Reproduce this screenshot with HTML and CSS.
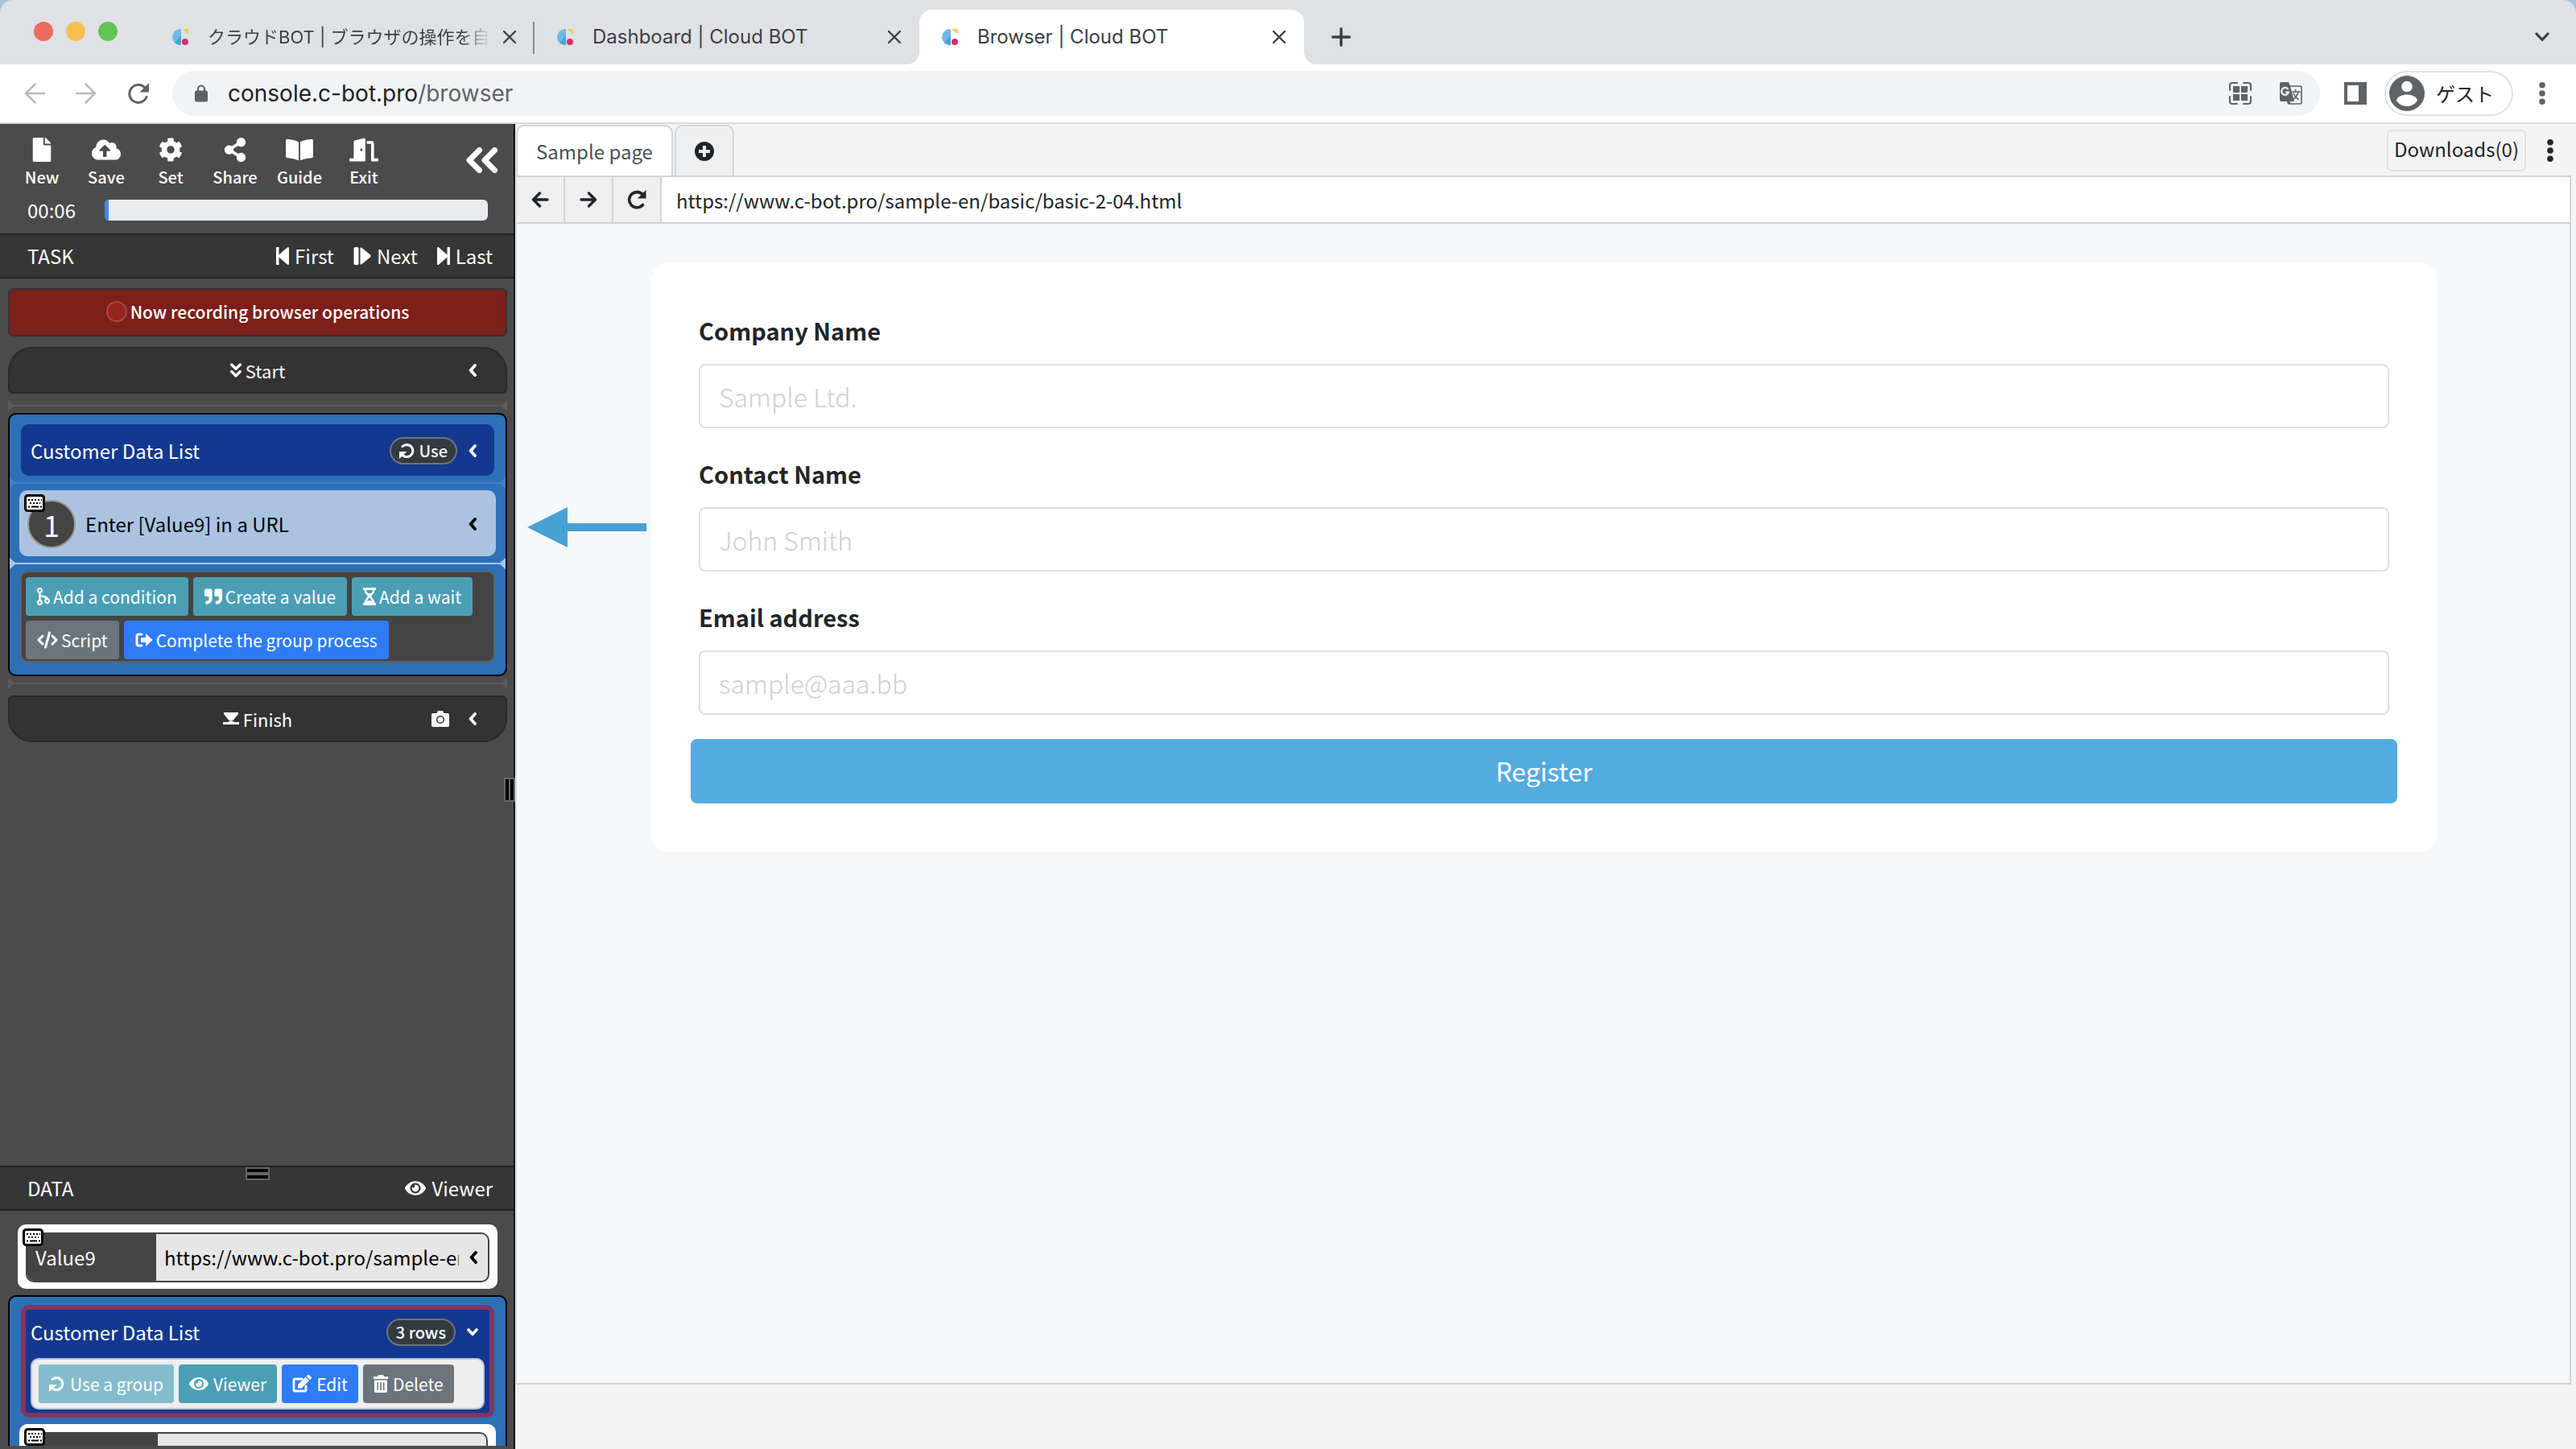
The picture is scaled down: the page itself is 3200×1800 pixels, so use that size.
FILE: index.html
```
<!DOCTYPE html>
<html lang="en">

<head>
    <meta charset="UTF-8">
    <meta name="viewport" content="width=device-width, initial-scale=1.0">
    <title>Browser | Cloud BOT</title>
    <link rel="stylesheet" href="styles.css">
</head>

<body>
    <!-- icon set -->
    <svg class="sprite" aria-hidden="true">
        <symbol id="favicon" viewBox="0 0 20 20">
            <path fill="#6fb9e8" d="M11 0v20h-1A10 10 0 0 1 10 0z" />
            <path fill="#4aa3dc" d="M11 8v12h-1a10 10 0 0 1-7-3z" />
            <path fill="#f3cd5c" d="M12 0h8v7z" />
            <circle fill="#d42f6d" cx="16" cy="16" r="4" />
        </symbol>
        <symbol id="close" viewBox="0 0 16 16">
            <path class="line" stroke-width="2.4" d="M1 1l14 14M15 1L1 15" />
        </symbol>
        <symbol id="plus" viewBox="0 0 24 24">
            <path class="line" stroke-width="3.4" d="M12 1.700v20.600M1.700 12h20.600" />
        </symbol>
        <symbol id="down" viewBox="0 0 18 12">
            <path class="line" stroke-width="3.2" d="M2 2l7 7.500L16 2" />
        </symbol>
        <symbol id="chevron-down" viewBox="0 0 14 12">
            <path class="line" stroke-width="3.6" d="M2 3l5 5.400L12 3" />
        </symbol>
        <symbol id="nav-back" viewBox="0 0 26 26">
            <path class="line" stroke-width="2.6" d="M25 13H2M13.500 1.500L2 13l11.500 11.500" />
        </symbol>
        <symbol id="nav-forward" viewBox="0 0 26 26">
            <path class="line" stroke-width="2.6" d="M1 13h23M12.500 1.500L24 13 12.500 24.500" />
        </symbol>
        <symbol id="nav-reload" viewBox="0 0 28 26">
            <path class="line" stroke-width="3" d="M24 17.500A11 11 0 1 1 21.500 5.500" />
            <path fill="currentColor" d="M27 0v11.500H15.500z" />
        </symbol>
        <symbol id="lock" viewBox="0 0 16 22">
            <path class="line" stroke-width="2.2" d="M4 9V5.500a4 4 0 0 1 8 0V9" />
            <rect fill="currentColor" y="7.500" width="16" height="14" rx="2" />
        </symbol>
        <symbol id="qr" viewBox="0 0 28 28">
            <path class="line" stroke-width="2" d="M1 10V4a3 3 0 0 1 3-3h6M18 1h6a3 3 0 0 1 3 3v6M27 18v6a3 3 0 0 1-3 3h-6M10 27H4a3 3 0 0 1-3-3v-6" />
            <path fill="currentColor" d="M5 5h8v8H5zM15 5h8v8h-8zM5 15h8v8H5zM15 15h8v8h-8z" />
        </symbol>
        <symbol id="translate" viewBox="0 0 28 28">
            <rect class="line" stroke-width="1.600" x="10" y="5" width="17" height="22" rx="2" />
            <path fill="currentColor" d="M2 0h9l2 5 5 19h-5v4l-4-4H2a2 2 0 0 1-2-2V2a2 2 0 0 1 2-2z" />
            <path fill="none" stroke="#f1f3f4" stroke-width="2.200" d="M10.500 9A4.500 4.500 0 1 0 11 12.500H7" />
            <path class="line" stroke-width="1.600" d="M14.500 12H25M19.500 9.500V12M23 12c-1 4-3 7-6 9M17 14c1 3 3.500 5.500 6 7.500" />
        </symbol>
        <symbol id="panel" viewBox="0 0 28 28">
            <path fill="currentColor" fill-rule="evenodd" d="M0 0h28v28H0zM4 4v20h14V4z" />
        </symbol>
        <symbol id="avatar" viewBox="0 0 44 44">
            <circle fill="currentColor" cx="22" cy="22" r="22" />
            <circle fill="#fff" cx="22" cy="13.500" r="6.800" />
            <path fill="#fff" d="M9 31c0-5 8-7.500 13-7.500S35 26 35 31c-3 4.500-8 7-13 7s-10-2.500-13-7z" />
        </symbol>
        <symbol id="dots" viewBox="0 0 8 28">
            <path fill="currentColor" d="M4 0a3.800 3.800 0 1 1 0 7.600A3.800 3.800 0 0 1 4 0zM4 10.200a3.800 3.800 0 1 1 0 7.600 3.800 3.800 0 0 1 0-7.600zM4 20.400a3.800 3.800 0 1 1 0 7.600 3.800 3.800 0 0 1 0-7.600z" />
        </symbol>
        <symbol id="file" viewBox="0 0 384 512">
            <path fill="currentColor" d="M224 136V0H24C10.700 0 0 10.700 0 24v464c0 13.300 10.700 24 24 24h336c13.300 0 24-10.700 24-24V160H248c-13.200 0-24-10.800-24-24zm160-14.100v6.100H256V0h6.100c6.400 0 12.500 2.500 17 7l97.900 98c4.500 4.500 7 10.600 7 16.900z" />
        </symbol>
        <symbol id="cloud" viewBox="0 0 640 512">
            <path fill="currentColor" d="M537.6 226.6c4.1-10.700 6.400-22.400 6.400-34.600 0-53-43-96-96-96-19.700 0-38.100 6-53.300 16.200C367 64.200 315.300 32 256 32c-88.400 0-160 71.600-160 160 0 2.700.1 5.400.2 8.100C40.200 219.800 0 273.200 0 336c0 79.500 64.500 144 144 144h368c70.700 0 128-57.300 128-128 0-61.900-44-113.600-102.400-125.400zM393.400 288H328v112c0 8.800-7.200 16-16 16h-48c-8.800 0-16-7.200-16-16V288h-65.400c-14.300 0-21.400-17.200-11.300-27.300l105.400-105.400c6.200-6.200 16.400-6.200 22.600 0l105.400 105.400c10.100 10.100 2.900 27.300-11.300 27.300z" />
        </symbol>
        <symbol id="cog" viewBox="0 0 512 512">
            <path fill="currentColor" d="M487.4 315.7l-42.600-24.600c4.300-23.200 4.300-47 0-70.200l42.600-24.600c4.900-2.800 7.100-8.600 5.500-14-11.100-35.600-30-67.800-54.700-94.600-3.800-4.100-10-5.100-14.800-2.300L380.800 110c-17.900-15.400-38.500-27.300-60.800-35.100V25.800c0-5.600-3.900-10.500-9.400-11.700-36.700-8.200-74.300-7.800-109.200 0-5.500 1.200-9.400 6.100-9.400 11.700V75c-22.200 7.900-42.800 19.800-60.800 35.100L88.700 85.500c-4.900-2.800-11-1.900-14.800 2.300-24.700 26.700-43.600 58.900-54.700 94.600-1.700 5.400.6 11.200 5.500 14L67.300 221c-4.300 23.200-4.300 47 0 70.200l-42.600 24.600c-4.900 2.800-7.100 8.600-5.500 14 11.100 35.600 30 67.800 54.700 94.600 3.800 4.100 10 5.100 14.800 2.300l42.600-24.600c17.900 15.400 38.500 27.300 60.800 35.100v49.200c0 5.600 3.900 10.500 9.400 11.700 36.700 8.200 74.300 7.800 109.200 0 5.500-1.200 9.400-6.100 9.400-11.700v-49.200c22.200-7.900 42.800-19.800 60.800-35.100l42.600 24.600c4.900 2.800 11 1.900 14.800-2.300 24.700-26.700 43.600-58.900 54.700-94.600 1.500-5.500-.7-11.300-5.600-14.100zM256 336c-44.100 0-80-35.900-80-80s35.900-80 80-80 80 35.900 80 80-35.900 80-80 80z" />
        </symbol>
        <symbol id="share" viewBox="0 0 448 512">
            <path fill="currentColor" d="M352 320c-22.600 0-43.400 7.800-59.800 20.900l-102.500-64a96.500 96.500 0 0 0 0-41.700l102.500-64C308.600 184.200 329.400 192 352 192c53 0 96-43 96-96S405 0 352 0s-96 43-96 96c0 7.200.8 14.100 2.300 20.800l-102.500 64.100C139.400 167.800 118.600 160 96 160c-53 0-96 43-96 96s43 96 96 96c22.600 0 43.400-7.800 59.800-20.900l102.500 64A96.300 96.300 0 0 0 256 416c0 53 43 96 96 96s96-43 96-96-43-96-96-96z" />
        </symbol>
        <symbol id="book" viewBox="0 0 576 512">
            <path fill="currentColor" d="M542.2 32c-54.800 3.100-163.700 14.500-231 55.600-4.600 2.900-7.200 7.900-7.200 13.200v363.900c0 11.500 12.600 18.800 23.300 13.500 69.200-34.800 169.200-44.300 218.700-46.900 16.900-.9 30-14.500 30-30.700V62.700c0-17.700-15.400-31.700-33.800-30.700zM264.700 87.600C197.500 46.500 88.600 35.200 33.800 32 15.400 31 0 45 0 62.700v337.900c0 16.200 13.100 29.800 30 30.700 49.500 2.600 149.600 12.100 218.800 46.900 10.600 5.400 23.200-1.900 23.200-13.400V100.600c0-5.300-2.600-10.100-7.300-13z" />
        </symbol>
        <symbol id="door" viewBox="0 0 640 512">
            <path fill="currentColor" d="M624 448h-80V113.400C544 86.200 522.500 64 496 64H384v64h96v384h144c8.800 0 16-7.200 16-16v-32c0-8.800-7.200-16-16-16zM312.200 1l-192 49.700C106 54.400 96 67.700 96 82.900V448H16c-8.800 0-16 7.200-16 16v32c0 8.800 7.200 16 16 16h336V33.200c0-21.600-19.600-37.400-39.800-32.200zM264 288c-13.200 0-24-14.300-24-32s10.800-32 24-32 24 14.300 24 32-10.700 32-24 32z" />
        </symbol>
        <symbol id="eye" viewBox="0 0 576 512">
            <path fill="currentColor" d="M572.5 241.400C518.300 135.600 410.900 64 288 64S57.700 135.600 3.500 241.400a32.300 32.300 0 0 0 0 29.200C57.700 376.400 165.100 448 288 448s230.300-71.600 284.500-177.400a32.300 32.300 0 0 0 0-29.200zM288 400a144 144 0 1 1 144-144 143.900 143.900 0 0 1-144 144zm0-240a95.300 95.300 0 0 0-25.300 3.800 47.800 47.800 0 0 1-66.900 66.900A95.800 95.800 0 1 0 288 160z" />
        </symbol>
        <symbol id="quote" viewBox="0 0 512 512">
            <path fill="currentColor" d="M464 32H336c-26.500 0-48 21.500-48 48v128c0 26.500 21.500 48 48 48h80v64c0 35.300-28.700 64-64 64h-8c-13.300 0-24 10.700-24 24v48c0 13.300 10.700 24 24 24h8c88.400 0 160-71.600 160-160V80c0-26.500-21.500-48-48-48zm-288 0H48C21.500 32 0 53.500 0 80v128c0 26.500 21.500 48 48 48h80v64c0 35.300-28.700 64-64 64h-8c-13.300 0-24 10.700-24 24v48c0 13.300 10.700 24 24 24h8c88.400 0 160-71.600 160-160V80c0-26.500-21.500-48-48-48z" />
        </symbol>
        <symbol id="double-left" viewBox="0 0 40 32">
            <path class="line" stroke-width="7" stroke-linejoin="miter" d="M17.500 3.500L5 16l12.500 12.500M36.500 3.500L24 16l12.500 12.500" />
        </symbol>
        <symbol id="double-down" viewBox="0 0 14 18">
            <path class="line" stroke-width="3.400" d="M1.700 2L7 7.200 12.300 2M1.700 10.500L7 15.700l5.300-5.200" />
        </symbol>
        <symbol id="chevron-left" viewBox="0 0 10 16">
            <path class="line" stroke-width="3.800" d="M8 2L2.600 8 8 14" />
        </symbol>
        <symbol id="step-first" viewBox="0 0 16 22">
            <path fill="currentColor" d="M0 0h3.500v9.500L14 .3q2-1 2 1v19.400q0 2-2 1L3.500 12.500V22H0z" />
        </symbol>
        <symbol id="step-last" viewBox="0 0 16 22">
            <path fill="currentColor" d="M16 0h-3.500v9.500L2 .3q-2-1-2 1v19.400q0 2 2 1l10.500-9.200V22H16z" />
        </symbol>
        <symbol id="step-next" viewBox="0 0 21 22">
            <rect fill="currentColor" width="6" height="22" rx="1.500" />
            <path fill="currentColor" d="M8 1.500Q8 0 9.500.5l11 9q1 1.500 0 3l-11 9Q8 22 8 20.500z" />
        </symbol>
        <symbol id="loop" viewBox="0 0 20 20">
            <path class="line" stroke-width="3" d="M4 4.500a7.600 7.600 0 1 1 1 11.800" />
            <path fill="currentColor" d="M0 11h9.500L0 20z" />
        </symbol>
        <symbol id="keyboard" viewBox="0 0 26 22">
            <rect x="1.500" y="1.500" width="23" height="19" rx="3" fill="#fff" stroke="#000" stroke-width="3" />
            <path stroke="#000" stroke-width="2" stroke-dasharray="2 2" d="M5 7h17M7 11h13" />
            <path stroke="#000" stroke-width="2" d="M5 15.500h2M9 15.500h9M20 15.500h2" />
        </symbol>
        <symbol id="branch" viewBox="0 0 16 22">
            <path class="line" stroke-width="2.400" d="M3.500 6v10M3.500 8c0 5 9 1 9 6" />
            <circle class="line" stroke-width="2" cx="3.500" cy="3.500" r="2.400" />
            <circle class="line" stroke-width="2" cx="3.500" cy="18.500" r="2.400" />
            <circle class="line" stroke-width="2" cx="12.500" cy="16.500" r="2.400" />
        </symbol>
        <symbol id="hourglass" viewBox="0 0 16 22">
            <path fill="currentColor" d="M0 0h16v3H0zM0 19h16v3H0z" />
            <path class="line" stroke-width="2.400" d="M2.500 2c0 5 4 6.500 4.500 9-.5 2.500-4.500 4-4.500 9M13.500 2c0 5-4 6.500-4.500 9 .5 2.500 4.500 4 4.500 9" />
            <path fill="currentColor" d="M4 7h8l-4 5zM3 19c1-4 9-4 10 0z" />
        </symbol>
        <symbol id="code" viewBox="0 0 26 22">
            <path class="line" stroke-width="3" d="M7 6l-5 5 5 5M19 6l5 5-5 5M15.500 2l-5 18" />
        </symbol>
        <symbol id="leave" viewBox="0 0 22 18">
            <path class="line" stroke-width="3" d="M8 2H4.500A2.500 2.500 0 0 0 2 4.500v9A2.500 2.500 0 0 0 4.500 16H8" />
            <path fill="currentColor" d="M7 6h6V1l8.500 8L13 17v-5H7z" />
        </symbol>
        <symbol id="finish" viewBox="0 0 20 16">
            <path fill="currentColor" d="M1 0h18v2l-6.500 8h-5L1 2zM0 12h6l4-2 4 2h6v3H0z" />
        </symbol>
        <symbol id="camera" viewBox="0 0 22 20">
            <path fill="currentColor" fill-rule="evenodd" d="M2 3h4.500L8 0h6l1.500 3H20a2 2 0 0 1 2 2v13a2 2 0 0 1-2 2H2a2 2 0 0 1-2-2V5a2 2 0 0 1 2-2zm9 3a5 5 0 1 0 0 10 5 5 0 0 0 0-10z" />
            <circle fill="currentColor" cx="11" cy="11" r="3.500" />
        </symbol>
        <symbol id="edit" viewBox="0 0 24 22">
            <path class="line" stroke-width="2.800" d="M12 5H3.500A1.500 1.500 0 0 0 2 6.500v12A1.500 1.500 0 0 0 3.500 20h12a1.500 1.500 0 0 0 1.500-1.500V14" />
            <path fill="currentColor" d="M7 12L16.500 2.500l4.500 4.500-9.500 9.500H7zM17.500 1.500L19 0q1.500-.5 2.500.5l2 2q.8 1-.2 2.500L22 6.200z" />
        </symbol>
        <symbol id="trash" viewBox="0 0 18 22">
            <path fill="currentColor" d="M0 2h5l1-2h6l1 2h5v3H0z" />
            <path fill="currentColor" fill-rule="evenodd" d="M1 6.500h16V20a2 2 0 0 1-2 2H3a2 2 0 0 1-2-2zM4.500 9v10H6V9zM8.200 9v10h1.600V9zM12 9v10h1.500V9z" />
        </symbol>
        <symbol id="plus-circle" viewBox="0 0 24 24">
            <path fill="currentColor" fill-rule="evenodd" d="M12 0a12 12 0 1 1 0 24 12 12 0 0 1 0-24zM10 5v5H5v4h5v5h4v-5h5v-4h-5V5z" />
        </symbol>
        <symbol id="arrow-left" viewBox="0 0 22 20">
            <path class="line" stroke-width="3.400" d="M20 10H3M10.500 2L2.500 10l8 8" />
        </symbol>
        <symbol id="arrow-right" viewBox="0 0 22 20">
            <path class="line" stroke-width="3.400" d="M2 10h17M11.500 2l8 8-8 8" />
        </symbol>
        <symbol id="redo" viewBox="0 0 24 24">
            <path class="line" stroke-width="3.600" d="M19.500 18.500A9.600 9.600 0 1 1 20 6.500" />
            <path fill="currentColor" d="M23.500 0v10.500H13z" />
        </symbol>
    </svg>

    <header class="tab-strip">
        <div class="lights">
            <span class="light light-red"></span>
            <span class="light light-yellow"></span>
            <span class="light light-green"></span>
        </div>
        <div class="window-tab divided">
            <svg class="i20"><use href="#favicon" /></svg>
            <span class="tab-title faded">クラウドBOT | ブラウザの操作を自</span>
            <button class="plain" aria-label="Close tab"><svg class="i16"><use href="#close" /></svg></button>
        </div>
        <div class="window-tab">
            <svg class="i20"><use href="#favicon" /></svg>
            <span class="tab-title">Dashboard | Cloud BOT</span>
            <button class="plain" aria-label="Close tab"><svg class="i16"><use href="#close" /></svg></button>
        </div>
        <div class="window-tab current">
            <svg class="i20"><use href="#favicon" /></svg>
            <span class="tab-title">Browser | Cloud BOT</span>
            <button class="plain" aria-label="Close tab"><svg class="i16"><use href="#close" /></svg></button>
        </div>
        <button class="plain new-tab" aria-label="New tab"><svg class="i24"><use href="#plus" /></svg></button>
        <button class="plain tab-search" aria-label="Search tabs"><svg class="icon-down"><use href="#down" /></svg></button>
    </header>

    <div class="toolbar">
        <button class="plain dim" aria-label="Back"><svg class="i26"><use href="#nav-back" /></svg></button>
        <button class="plain dim" aria-label="Forward"><svg class="i26"><use href="#nav-forward" /></svg></button>
        <button class="plain" aria-label="Reload"><svg class="i28"><use href="#nav-reload" /></svg></button>
        <div class="address">
            <svg class="icon-lock"><use href="#lock" /></svg>
            <span class="address-text">console.c-bot.pro<span class="path">/browser</span></span>
            <button class="plain" aria-label="QR code"><svg class="i28"><use href="#qr" /></svg></button>
            <button class="plain" aria-label="Translate"><svg class="i28"><use href="#translate" /></svg></button>
        </div>
        <button class="plain panel-button" aria-label="Side panel"><svg class="i28"><use href="#panel" /></svg></button>
        <button class="profile"><svg class="i44"><use href="#avatar" /></svg>ゲスト</button>
        <button class="plain" aria-label="Menu"><svg class="icon-dots"><use href="#dots" /></svg></button>
    </div>

    <div class="app">
        <aside class="sidebar">
            <div class="side-top">
                <nav class="tools">
                    <button class="tool"><svg class="i30"><use href="#file" /></svg>New</button>
                    <button class="tool"><svg class="icon-wide"><use href="#cloud" /></svg>Save</button>
                    <button class="tool"><svg class="i30"><use href="#cog" /></svg>Set</button>
                    <button class="tool"><svg class="i30"><use href="#share" /></svg>Share</button>
                    <button class="tool"><svg class="icon-wide"><use href="#book" /></svg>Guide</button>
                    <button class="tool"><svg class="icon-wide"><use href="#door" /></svg>Exit</button>
                    <button class="plain collapse" aria-label="Collapse"><svg class="icon-collapse"><use href="#double-left" /></svg></button>
                </nav>
                <div class="timer">
                    <span class="time">00:06</span>
                    <div class="progress"><div class="progress-bar" style="width: 1%"></div></div>
                </div>
            </div>

            <div class="side-head">
                <h2>TASK</h2>
                <button class="plain link"><svg class="icon-step"><use href="#step-first" /></svg>First</button>
                <button class="plain link"><svg class="icon-next"><use href="#step-next" /></svg>Next</button>
                <button class="plain link"><svg class="icon-step"><use href="#step-last" /></svg>Last</button>
            </div>

            <div class="task-list">
                <div class="recording"><span class="rec-dot"></span>Now recording browser operations</div>
                <div class="end-bar start">
                    <span class="end-label"><svg class="icon-double"><use href="#double-down" /></svg>Start</span>
                    <button class="plain toggle" aria-label="Open"><svg class="icon-chevron"><use href="#chevron-left" /></svg></button>
                </div>
                <div class="connector first"></div>
                <section class="group">
                    <div class="group-head">
                        <span class="grow">Customer Data List</span>
                        <button class="pill"><svg class="i20"><use href="#loop" /></svg>Use</button>
                        <button class="plain toggle" aria-label="Open"><svg class="icon-chevron"><use href="#chevron-left" /></svg></button>
                    </div>
                    <div class="connector blue"></div>
                    <div class="step">
                        <svg class="kbd"><use href="#keyboard" /></svg>
                        <span class="step-no">1</span>
                        <span class="grow">Enter [Value9] in a URL</span>
                        <button class="plain toggle" aria-label="Open"><svg class="icon-chevron"><use href="#chevron-left" /></svg></button>
                    </div>
                    <div class="connector light-blue"></div>
                    <div class="actions">
                        <button class="btn teal"><svg class="icon-step"><use href="#branch" /></svg>Add a condition</button>
                        <button class="btn teal"><svg class="i22"><use href="#quote" /></svg>Create a value</button>
                        <button class="btn teal"><svg class="icon-step"><use href="#hourglass" /></svg>Add a wait</button>
                        <button class="btn gray"><svg class="i26"><use href="#code" /></svg>Script</button>
                        <button class="btn blue-btn"><svg class="i22"><use href="#leave" /></svg>Complete the group process</button>
                    </div>
                </section>
                <div class="connector last"></div>
                <div class="end-bar finish">
                    <span class="end-label"><svg class="i20"><use href="#finish" /></svg>Finish</span>
                    <button class="plain" aria-label="Screenshot"><svg class="i22"><use href="#camera" /></svg></button>
                    <button class="plain toggle" aria-label="Open"><svg class="icon-chevron"><use href="#chevron-left" /></svg></button>
                </div>
            </div>

            <div class="data-pane">
                <div class="side-head">
                    <h2>DATA</h2>
                    <button class="plain link"><svg class="i26"><use href="#eye" /></svg>Viewer</button>
                </div>
                <div class="grip-row"></div>
                <div class="data-list">
                    <div class="value">
                        <svg class="kbd"><use href="#keyboard" /></svg>
                        <div class="value-row">
                            <span class="value-name">Value9</span>
                            <span class="value-text">https://www.c-bot.pro/sample-en</span>
                            <button class="plain toggle" aria-label="Open"><svg class="icon-chevron"><use href="#chevron-left" /></svg></button>
                        </div>
                    </div>
                    <section class="group data-wrap">
                        <div class="data-group">
                            <div class="data-head">
                                <span class="grow">Customer Data List</span>
                                <span class="pill">3 rows</span>
                                <button class="plain toggle" aria-label="Close"><svg class="icon-chevron-down"><use href="#chevron-down" /></svg></button>
                            </div>
                            <div class="data-actions">
                                <button class="btn teal" disabled><svg class="i20"><use href="#loop" /></svg>Use a group</button>
                                <button class="btn teal"><svg class="i24"><use href="#eye" /></svg>Viewer</button>
                                <button class="btn blue-btn"><svg class="i24"><use href="#edit" /></svg>Edit</button>
                                <button class="btn gray"><svg class="icon-trash"><use href="#trash" /></svg>Delete</button>
                            </div>
                        </div>
                        <div class="value nested">
                            <svg class="kbd"><use href="#keyboard" /></svg>
                            <div class="value-row">
                                <span class="value-name"></span>
                                <span class="value-text"></span>
                            </div>
                        </div>
                    </section>
                </div>
            </div>
            <div class="grip-column"></div>
        </aside>

        <main class="main">
            <div class="page-tabs">
                <button class="page-tab active">Sample page</button>
                <button class="page-tab add" aria-label="Add page"><svg class="i24"><use href="#plus-circle" /></svg></button>
                <button class="downloads">Downloads(0)</button>
                <button class="plain page-menu" aria-label="Menu"><svg class="icon-dots"><use href="#dots" /></svg></button>
            </div>
            <div class="frame">
                <div class="page-nav">
                    <button aria-label="Back"><svg class="i22"><use href="#arrow-left" /></svg></button>
                    <button aria-label="Forward"><svg class="i22"><use href="#arrow-right" /></svg></button>
                    <button aria-label="Reload"><svg class="i24"><use href="#redo" /></svg></button>
                    <input type="text" aria-label="URL" value="https://www.c-bot.pro/sample-en/basic/basic-2-04.html">
                </div>
                <div class="page">
                    <svg class="pointer" viewBox="0 0 148 50">
                        <path d="M0 25L50 0v20h98v10H50v20z" />
                    </svg>
                    <form class="card">
                        <div class="form-group">
                            <label for="company">Company Name</label>
                            <input type="text" id="company" placeholder="Sample Ltd.">
                        </div>
                        <div class="form-group">
                            <label for="contact">Contact Name</label>
                            <input type="text" id="contact" placeholder="John Smith">
                        </div>
                        <div class="form-group">
                            <label for="email">Email address</label>
                            <input type="text" id="email" placeholder="sample@aaa.bb">
                        </div>
                        <button type="button" class="register">Register</button>
                    </form>
                </div>
            </div>
        </main>
    </div>
</body>

</html>
```
FILE: styles.css
```
* {
    box-sizing: border-box;
}

body {
    margin: 0;
    height: 100vh;
    display: flex;
    flex-direction: column;
    overflow: hidden;
    background: #a9c4de;
    color: #212529;
    font-family: "Noto Sans CJK JP", "Noto Sans", sans-serif;
    font-size: 24px;
    line-height: 32px;
}

button,
input {
    font: inherit;
    color: inherit;
}

button {
    display: flex;
    align-items: center;
    justify-content: center;
    margin: 0;
    cursor: pointer;
    white-space: nowrap;
}

svg {
    display: block;
    flex: none;
}

.sprite {
    position: absolute;
    width: 0;
    height: 0;
}

.line {
    fill: none;
    stroke: currentColor;
    stroke-linecap: round;
    stroke-linejoin: round;
}

.plain {
    padding: 0;
    border: none;
    background: none;
}

.grow {
    flex: 1;
}

/* icon sizes */
.i16 { width: 16px; height: 16px; }
.i20 { width: 20px; height: 20px; }
.i22 { width: 22px; height: 22px; }
.i24 { width: 24px; height: 24px; }
.i26 { width: 26px; height: 26px; }
.i28 { width: 28px; height: 28px; }
.i30 { width: 30px; height: 30px; }
.i44 { width: 44px; height: 44px; }
.icon-wide { width: 36px; height: 30px; }
.icon-down { width: 18px; height: 12px; }
.icon-lock { width: 16px; height: 22px; }
.icon-dots { width: 8px; height: 28px; }
.icon-step { width: 16px; height: 22px; }
.icon-next { width: 22px; height: 22px; }
.icon-trash { width: 18px; height: 22px; }
.icon-double { width: 14px; height: 20px; }
.icon-chevron { width: 10px; height: 16px; }
.icon-chevron-down { width: 14px; height: 12px; }
.icon-collapse { width: 40px; height: 32px; }

/* browser window */
.tab-strip {
    display: flex;
    align-items: flex-end;
    height: 80px;
    flex: none;
    background: #dfe1e5;
    border-radius: 16px 16px 0 0;
    font-family: Inter, "Noto Sans CJK JP", sans-serif;
    font-size: 24px;
    color: #3c4043;
}

.lights {
    display: flex;
    flex: none;
    gap: 16px;
    width: 186px;
    padding: 0 0 29px 42px;
}

.light {
    width: 24px;
    height: 24px;
    border-radius: 50%;
}

.light-red { background: #ed6a5e; }
.light-yellow { background: #f5bf4f; }
.light-green { background: #61c554; }

.window-tab {
    position: relative;
    display: flex;
    align-items: center;
    flex: 0 1 478px;
    min-width: 0;
    height: 68px;
    padding: 0 23px 0 28px;
}

.divided::after {
    content: "";
    position: absolute;
    right: 0;
    top: 15px;
    width: 2px;
    height: 40px;
    background: #80868b;
}

.tab-title {
    flex: 1;
    min-width: 0;
    margin: 0 16px 0 24px;
    overflow: hidden;
    white-space: nowrap;
}

.faded {
    font-size: 22px;
    -webkit-mask-image: linear-gradient(to right, #000 90%, transparent);
    mask-image: linear-gradient(to right, #000 90%, transparent);
}

.current {
    background: #fff;
    border-radius: 16px 16px 0 0;
}

.current::before,
.current::after {
    content: "";
    position: absolute;
    bottom: 0;
    width: 16px;
    height: 16px;
}

.current::before {
    left: -16px;
    background: radial-gradient(circle at 0 0, transparent 16px, #fff 16px);
}

.current::after {
    right: -16px;
    background: radial-gradient(circle at 100% 0, transparent 16px, #fff 16px);
}

.new-tab {
    height: 68px;
    margin-left: 34px;
}

.tab-search {
    height: 68px;
    margin: 0 33px 0 auto;
}

.toolbar {
    display: flex;
    align-items: center;
    flex: none;
    height: 74px;
    padding: 0 38px 0 30px;
    gap: 38px;
    background: #fff;
    border-bottom: 2px solid #d8dade;
    color: #5f6368;
}

.dim {
    color: #babcbe;
}

.address {
    display: flex;
    align-items: center;
    flex: 1;
    height: 56px;
    margin-left: -10px;
    padding: 0 22px 0 28px;
    gap: 35px;
    border-radius: 28px;
    background: #f1f3f4;
    font-family: Inter, sans-serif;
    font-size: 28px;
}

.address-text {
    flex: 1;
    margin-left: -10px;
    color: #202124;
}

.path {
    color: #5f6368;
}

.panel-button {
    margin-left: -8px;
}

.profile {
    height: 56px;
    margin: 0 -6px 0 -16px;
    padding: 0 22px 0 4px;
    gap: 14px;
    border: 2px solid #e0e2e5;
    border-radius: 28px;
    background: #fff;
    color: #202124;
}

.profile svg {
    color: #5f6368;
}

.app {
    display: flex;
    flex: 1;
    min-height: 0;
}

/* sidebar */
.sidebar {
    position: relative;
    display: flex;
    flex-direction: column;
    flex: none;
    width: 640px;
    padding-bottom: 4px;
    border-right: 2px solid #000;
    background: #4b4b4b;
    color: #fff;
}

.side-top {
    flex: none;
    height: 136px;
}

.tools {
    display: flex;
    align-items: flex-start;
    padding: 17px 20px 0 12px;
}

.tool {
    flex-direction: column;
    width: 80px;
    padding: 0;
    gap: 7px;
    border: none;
    background: none;
    font-size: 20px;
    line-height: 24px;
    font-weight: 500;
}

.collapse {
    height: 56px;
    margin-left: auto;
}

.timer {
    display: flex;
    align-items: center;
    padding: 13px 32px 0 34px;
}

.time {
    width: 96px;
}

.progress {
    flex: 1;
    height: 26px;
    border-radius: 6px;
    overflow: hidden;
    background: #e9ecef;
}

.progress-bar {
    height: 100%;
    background: #4285f0;
}

.side-head {
    display: flex;
    align-items: center;
    flex: none;
    height: 56px;
    padding: 0 26px 0 34px;
    gap: 24px;
    border-top: 2px solid #222;
    border-bottom: 2px solid #222;
    background: #363636;
}

.side-head h2 {
    flex: 1;
    margin: 0;
    font-size: 24px;
    font-weight: 400;
}

.link {
    gap: 7px;
}

.task-list {
    flex: 1;
    min-height: 0;
    overflow: hidden;
    padding: 12px 8px 0 10px;
}

.recording {
    display: flex;
    align-items: center;
    justify-content: center;
    height: 60px;
    padding-bottom: 2px;
    gap: 4px;
    border: 2px solid #333;
    border-radius: 6px;
    background: #7d1f1a;
    font-size: 21px;
    font-weight: 500;
}

.rec-dot {
    width: 26px;
    height: 26px;
    border: 2px solid #a34c47;
    border-radius: 50%;
    background: #97241e;
}

.end-bar {
    display: flex;
    align-items: center;
    height: 58px;
    padding: 0 36px;
    gap: 24px;
    border: 2px solid #292929;
    background: #333;
    font-size: 22px;
}

.start {
    margin-top: 13px;
    padding-left: 70px;
    border-radius: 30px 30px 6px 6px;
}

.finish {
    padding-left: 116px;
    border-radius: 6px 6px 30px 30px;
}

.end-label {
    display: flex;
    flex: 1;
    align-items: center;
    justify-content: center;
    gap: 5px;
}

/* thin rule with an arrow head at each end */
.connector {
    height: 14px;
    color: #5c5c5c;
    background: currentColor;
    clip-path: polygon(0 0, 7px 6px, calc(100% - 7px) 6px, 100% 0, 100% 100%, calc(100% - 7px) 8px, 7px 8px, 0 100%);
}

.first {
    margin: 8px 0 2px;
}

.last {
    margin: 2px 0 8px;
}

.blue {
    margin: 2px 0;
    color: #3f80c6;
}

.light-blue {
    margin: 2px 0;
    color: #a5c8f0;
}

.group {
    padding: 12px 0 15px;
    border: 2px solid #000;
    border-radius: 10px;
    background: #2d70b7;
}

.group-head {
    display: flex;
    align-items: center;
    height: 64px;
    margin: 0 14px;
    padding: 2px 22px 0 12px;
    border-radius: 10px;
    background: #12398f;
}

.pill {
    display: flex;
    align-items: center;
    height: 34px;
    margin-right: 14px;
    padding: 0 10px;
    gap: 5px;
    border: 2px solid #6c757d;
    border-radius: 17px;
    background: #343a40;
    color: #fff;
    font-size: 20px;
    font-weight: 500;
}

.step {
    position: relative;
    display: flex;
    align-items: center;
    height: 82px;
    margin: 0 12px;
    padding: 2px 24px 0 10px;
    border-radius: 10px;
    background: #abc3e0;
    color: #000;
}

.step-no {
    width: 60px;
    height: 60px;
    margin-right: 12px;
    border: 2px solid #999;
    border-radius: 50%;
    background: #444;
    color: #fff;
    font-size: 36px;
    line-height: 56px;
    text-align: center;
}

.kbd {
    position: absolute;
    left: 5px;
    top: 5px;
    width: 28px;
    height: 22px;
}

.actions {
    display: flex;
    flex-wrap: wrap;
    gap: 6px;
    margin: 0 13px;
    padding: 6px 5px 2px;
    border: 2px solid #606060;
    border-radius: 10px;
    background: #444;
}

.btn {
    height: 48px;
    padding: 0 14px;
    gap: 4px;
    border: none;
    border-radius: 4px;
    color: #fff;
    font-size: 21px;
}

.teal { background: #4a9fb5; }
.gray { background: #6c757d; }
.blue-btn { background: #307cf6; }

.btn:disabled {
    background: #84bccb;
}

.data-pane {
    position: relative;
    display: flex;
    flex-direction: column;
    flex: 0 0 348px;
    min-height: 0;
}

.data-list {
    flex: 1;
    min-height: 0;
    overflow: hidden;
    padding: 17px 8px 0 10px;
}

.value {
    position: relative;
    height: 80px;
    margin: 0 12px 8px;
    padding: 10px;
    border-radius: 10px;
    background: #fff;
}

.value-row {
    display: flex;
    align-items: center;
    height: 62px;
    padding-right: 13px;
    border: 2px solid #444;
    border-radius: 10px;
    background: #e6e6e6;
    color: #000;
    overflow: hidden;
}

.value-name {
    flex: none;
    width: 160px;
    height: 100%;
    padding-left: 10px;
    background: #444;
    color: #fff;
    line-height: 58px;
}

.value-text {
    flex: 1;
    min-width: 0;
    margin: 0 13px 0 10px;
    overflow: hidden;
    white-space: nowrap;
}

.data-wrap {
    padding-top: 10px;
}

.data-group {
    margin: 0 14px;
    padding: 0 6px 4px;
    border: 6px solid #7d3860;
    border-radius: 10px;
    background: #12398f;
}

.data-head {
    display: flex;
    align-items: center;
    height: 60px;
    padding: 0 8px 4px 0;
}

.data-actions {
    display: flex;
    gap: 6px;
    padding: 6px 8px;
    border: 2px solid #b9c4dc;
    border-radius: 10px;
    background: #eee;
}

.data-actions .btn {
    padding: 0 13px;
    gap: 6px;
}

.nested {
    margin: 8px 12px 0;
}

/* pane resize handles */
.grip-row,
.grip-column {
    position: absolute;
    border: 0 solid #000;
    box-shadow: 0 0 0 2px #666;
    background: #666;
}

.grip-row {
    top: 4px;
    left: 50%;
    width: 26px;
    height: 12px;
    margin-left: -12px;
    border-width: 4px 0;
}

.grip-column {
    top: 50%;
    right: 0;
    width: 10px;
    height: 26px;
    margin-top: -9px;
    border-width: 0 4px;
}

/* main area */
.main {
    display: flex;
    flex-direction: column;
    flex: 1;
    min-width: 0;
    padding: 1px 6px 80px 1px;
    background: #f4f4f4;
}

.page-tabs {
    display: flex;
    align-items: center;
    height: 63px;
    gap: 2px;
}

.page-tab {
    height: 63px;
    padding: 0 23px;
    border: 2px solid #cfd4da;
    border-bottom: none;
    border-radius: 10px 10px 0 0;
    background: #fff;
    color: #495057;
}

.add {
    background: #efefef;
    color: #212529;
}

.downloads {
    height: 52px;
    margin: 0 24px 0 auto;
    padding: 0 7px 4px;
    border: 2px solid #dee2e6;
    border-radius: 6px;
    background: #f4f4f4;
}

.page-menu {
    margin-right: 22px;
}

.frame {
    display: flex;
    flex-direction: column;
    flex: 1;
    border: 2px solid #cfd4da;
    border-left-width: 1px;
    background: #f7f8fa;
}

.page-nav {
    display: flex;
    height: 58px;
    border-bottom: 2px solid #cfd4da;
    background: #fff;
}

.page-nav button {
    width: 60px;
    padding: 0;
    border: none;
    border-right: 2px solid #cfd4da;
    background: #efefef;
}

.page-nav input {
    flex: 1;
    padding: 2px 18px 0;
    border: none;
    outline: none;
    background: none;
}

.page {
    position: relative;
    flex: 1;
    padding: 48px 164px 0 166px;
}

.pointer {
    position: absolute;
    left: 13px;
    top: 352px;
    width: 148px;
    height: 50px;
    fill: #47a2d3;
}

.card {
    padding: 68px 60px 60px;
    border-radius: 24px;
    background: #fff;
}

.form-group {
    display: flex;
    flex-direction: column;
    gap: 26px;
    margin-bottom: 40px;
}

.form-group label {
    font-size: 29px;
    font-weight: 700;
}

.form-group input {
    height: 80px;
    padding: 0 23px;
    border: 2px solid #dcdee3;
    border-radius: 8px;
    background: #fff;
    font-size: 32px;
    font-weight: 300;
}

.form-group input::placeholder {
    color: #d0d0d0;
    opacity: 1;
}

.register {
    width: calc(100% + 20px);
    height: 80px;
    margin: -10px -10px 0;
    padding: 0 0 2px;
    border: none;
    border-radius: 8px;
    background: #53abe1;
    color: #fff;
    font-size: 32px;
}
```
